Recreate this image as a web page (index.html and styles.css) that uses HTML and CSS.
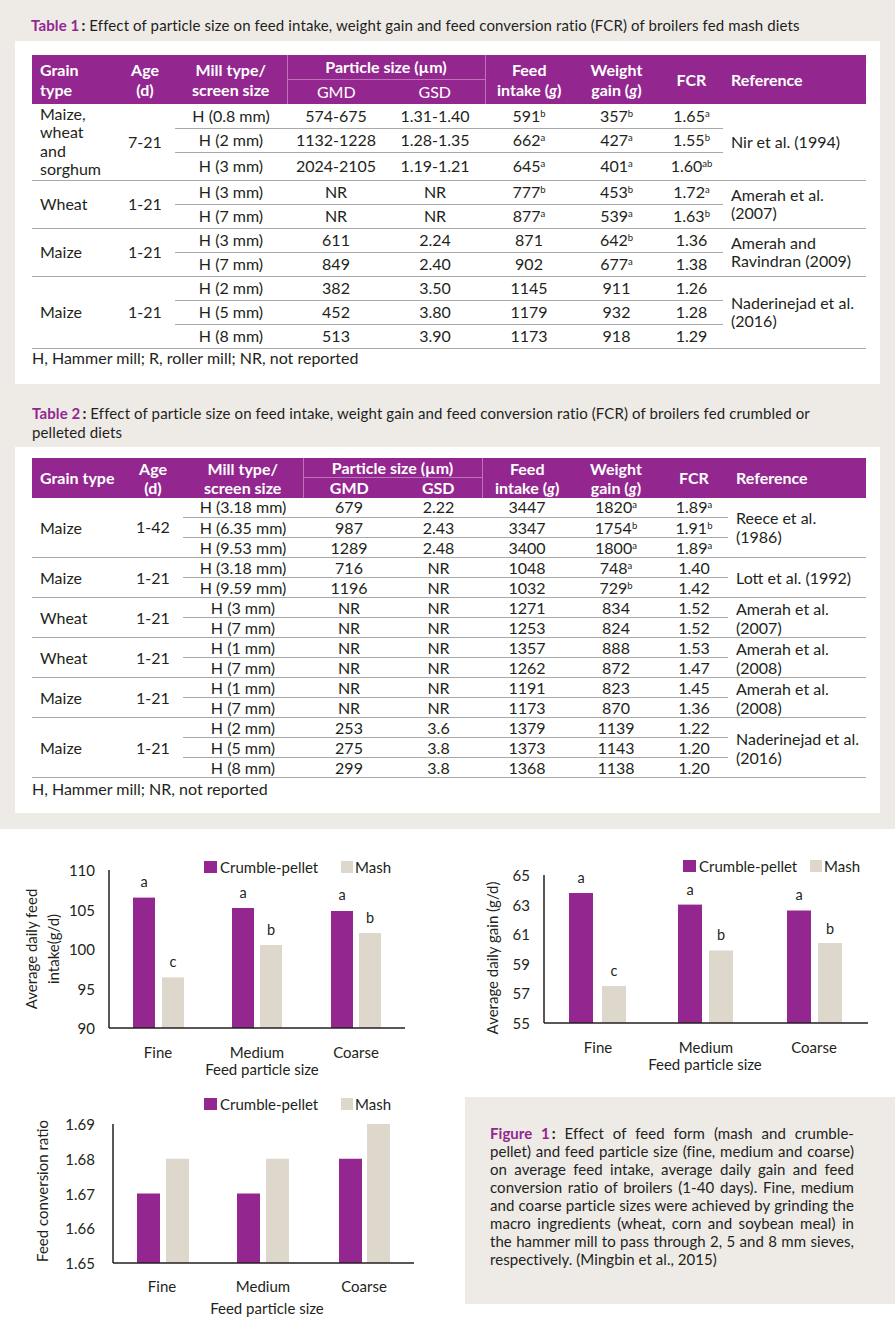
FILE: index.html
```html
<!DOCTYPE html>
<html lang="en">
<head>
<meta charset="utf-8">
<title>Particle size tables</title>
<link rel="stylesheet" href="styles.css">
</head>
<body>
<section class="top">
  <p class="caption c1"><b class="lab">Table 1</b><b class="colon">:</b> Effect of particle size on feed intake, weight gain and feed conversion ratio (FCR) of broilers fed mash diets</p>
  <div class="panel p1">
    <table class="t t1">
      <colgroup><col style="width:83px"><col style="width:60px"><col style="width:112px"><col style="width:98px"><col style="width:100px"><col style="width:88px"><col style="width:87px"><col style="width:63px"><col style="width:143px"></colgroup>
      <thead>
        <tr class="h1"><th rowspan="2" class="l">Grain<br>type</th><th rowspan="2">Age<br>(d)</th><th rowspan="2">Mill type/<br>screen size</th><th colspan="2" class="ps">Particle size (µm)</th><th rowspan="2" class="vr">Feed<br>intake (<i>g</i>)</th><th rowspan="2">Weight<br>gain (<i>g</i>)</th><th rowspan="2">FCR</th><th rowspan="2" class="l">Reference</th></tr>
        <tr class="h2"><th class="sub vl">GMD</th><th class="sub">GSD</th></tr>
      </thead>
      <tbody>
        <tr class="g"><td rowspan="3" class="l">Maize,<br>wheat<br>and<br>sorghum</td><td rowspan="3">7-21</td><td>H (0.8 mm)</td><td>574-675</td><td>1.31-1.40</td><td>591<sup>b</sup></td><td>357<sup>b</sup></td><td>1.65<sup>a</sup></td><td rowspan="3" class="l">Nir et al. (1994)</td></tr>
        <tr><td>H (2 mm)</td><td>1132-1228</td><td>1.28-1.35</td><td>662<sup>a</sup></td><td>427<sup>a</sup></td><td>1.55<sup>b</sup></td></tr>
        <tr class="tall"><td>H (3 mm)</td><td>2024-2105</td><td>1.19-1.21</td><td>645<sup>a</sup></td><td>401<sup>a</sup></td><td>1.60<sup>ab</sup></td></tr>
        <tr class="g"><td rowspan="2" class="l">Wheat</td><td rowspan="2">1-21</td><td>H (3 mm)</td><td>NR</td><td>NR</td><td>777<sup>b</sup></td><td>453<sup>b</sup></td><td>1.72<sup>a</sup></td><td rowspan="2" class="l">Amerah et al.<br>(2007)</td></tr>
        <tr><td>H (7 mm)</td><td>NR</td><td>NR</td><td>877<sup>a</sup></td><td>539<sup>a</sup></td><td>1.63<sup>b</sup></td></tr>
        <tr class="g"><td rowspan="2" class="l">Maize</td><td rowspan="2">1-21</td><td>H (3 mm)</td><td>611</td><td>2.24</td><td>871</td><td>642<sup>b</sup></td><td>1.36</td><td rowspan="2" class="l">Amerah and<br>Ravindran (2009)</td></tr>
        <tr><td>H (7 mm)</td><td>849</td><td>2.40</td><td>902</td><td>677<sup>a</sup></td><td>1.38</td></tr>
        <tr class="g"><td rowspan="3" class="l">Maize</td><td rowspan="3">1-21</td><td>H (2 mm)</td><td>382</td><td>3.50</td><td>1145</td><td>911</td><td>1.26</td><td rowspan="3" class="l">Naderinejad et al.<br>(2016)</td></tr>
        <tr><td>H (5 mm)</td><td>452</td><td>3.80</td><td>1179</td><td>932</td><td>1.28</td></tr>
        <tr class="last"><td>H (8 mm)</td><td>513</td><td>3.90</td><td>1173</td><td>918</td><td>1.29</td></tr>
      </tbody>
    </table>
    <p class="foot">H, Hammer mill; R, roller mill; NR, not reported</p>
  </div>

  <p class="caption c2"><span class="ln"><b class="lab">Table 2</b><b class="colon">:</b> Effect of particle size on feed intake, weight gain and feed conversion ratio (FCR) of broilers fed crumbled or</span><span class="ln">pelleted diets</span></p>
  <div class="panel p2">
    <table class="t t2">
      <colgroup><col style="width:91px"><col style="width:60px"><col style="width:120px"><col style="width:92px"><col style="width:87px"><col style="width:90px"><col style="width:88px"><col style="width:68px"><col style="width:138px"></colgroup>
      <thead>
        <tr class="h1"><th rowspan="2" class="l">Grain type</th><th rowspan="2">Age<br>(d)</th><th rowspan="2">Mill type/<br>screen size</th><th colspan="2" class="ps">Particle size (µm)</th><th rowspan="2" class="vr">Feed<br>intake (<i>g</i>)</th><th rowspan="2">Weight<br>gain (<i>g</i>)</th><th rowspan="2">FCR</th><th rowspan="2" class="l">Reference</th></tr>
        <tr class="h2"><th class="vl">GMD</th><th>GSD</th></tr>
      </thead>
      <tbody>
        <tr class="g"><td rowspan="3" class="l">Maize</td><td rowspan="3">1-42</td><td>H (3.18 mm)</td><td>679</td><td>2.22</td><td>3447</td><td>1820<sup>a</sup></td><td>1.89<sup>a</sup></td><td rowspan="3" class="l">Reece et al.<br>(1986)</td></tr>
        <tr><td>H (6.35 mm)</td><td>987</td><td>2.43</td><td>3347</td><td>1754<sup>b</sup></td><td>1.91<sup>b</sup></td></tr>
        <tr><td>H (9.53 mm)</td><td>1289</td><td>2.48</td><td>3400</td><td>1800<sup>a</sup></td><td>1.89<sup>a</sup></td></tr>
        <tr class="g"><td rowspan="2" class="l">Maize</td><td rowspan="2">1-21</td><td>H (3.18 mm)</td><td>716</td><td>NR</td><td>1048</td><td>748<sup>a</sup></td><td>1.40</td><td rowspan="2" class="l">Lott et al. (1992)</td></tr>
        <tr><td>H (9.59 mm)</td><td>1196</td><td>NR</td><td>1032</td><td>729<sup>b</sup></td><td>1.42</td></tr>
        <tr class="g"><td rowspan="2" class="l">Wheat</td><td rowspan="2">1-21</td><td>H (3 mm)</td><td>NR</td><td>NR</td><td>1271</td><td>834</td><td>1.52</td><td rowspan="2" class="l">Amerah et al.<br>(2007)</td></tr>
        <tr><td>H (7 mm)</td><td>NR</td><td>NR</td><td>1253</td><td>824</td><td>1.52</td></tr>
        <tr class="g"><td rowspan="2" class="l">Wheat</td><td rowspan="2">1-21</td><td>H (1 mm)</td><td>NR</td><td>NR</td><td>1357</td><td>888</td><td>1.53</td><td rowspan="2" class="l">Amerah et al.<br>(2008)</td></tr>
        <tr><td>H (7 mm)</td><td>NR</td><td>NR</td><td>1262</td><td>872</td><td>1.47</td></tr>
        <tr class="g"><td rowspan="2" class="l">Maize</td><td rowspan="2">1-21</td><td>H (1 mm)</td><td>NR</td><td>NR</td><td>1191</td><td>823</td><td>1.45</td><td rowspan="2" class="l">Amerah et al.<br>(2008)</td></tr>
        <tr><td>H (7 mm)</td><td>NR</td><td>NR</td><td>1173</td><td>870</td><td>1.36</td></tr>
        <tr class="g"><td rowspan="3" class="l">Maize</td><td rowspan="3">1-21</td><td>H (2 mm)</td><td>253</td><td>3.6</td><td>1379</td><td>1139</td><td>1.22</td><td rowspan="3" class="l">Naderinejad et al.<br>(2016)</td></tr>
        <tr><td>H (5 mm)</td><td>275</td><td>3.8</td><td>1373</td><td>1143</td><td>1.20</td></tr>
        <tr class="last"><td>H (8 mm)</td><td>299</td><td>3.8</td><td>1368</td><td>1138</td><td>1.20</td></tr>
      </tbody>
    </table>
    <p class="foot">H, Hammer mill; NR, not reported</p>
  </div>
</section>

<section class="figs">
  <div class="chart">
    <svg width="450" height="252" viewBox="0 0 450 252">
      <g transform="translate(0,2)">
        <rect class="cp" x="204" y="30" width="13" height="12"/><text class="lg" x="220" y="36">Crumble-pellet</text>
        <rect class="ms" x="341" y="30" width="12" height="12"/><text class="lg" x="355" y="36">Mash</text>
        <text class="tk" x="95" y="39">110</text><text class="tk" x="95" y="78.5">105</text><text class="tk" x="95" y="118">100</text><text class="tk" x="95" y="157.5">95</text><text class="tk" x="95" y="197">90</text>
        <rect class="cp" x="133" y="66.6" width="22" height="130.4"/><rect class="ms" x="162" y="146.4" width="22" height="50.6"/>
        <rect class="cp" x="232" y="77" width="22" height="120"/><rect class="ms" x="260" y="114" width="22" height="83"/>
        <rect class="cp" x="331" y="80" width="22" height="117"/><rect class="ms" x="359" y="102" width="22" height="95"/>
        <line class="ax" x1="109" y1="39" x2="109" y2="197"/><line class="ax" x1="109" y1="197" x2="405" y2="197"/>
        <text class="lt" x="144" y="50">a</text><text class="lt" x="173" y="130">c</text><text class="lt" x="243" y="61">a</text><text class="lt" x="271" y="98">b</text><text class="lt" x="342" y="63">a</text><text class="lt" x="370" y="86">b</text>
        <text class="ct" x="158" y="221">Fine</text><text class="ct" x="257" y="221">Medium</text><text class="ct" x="356" y="221">Coarse</text>
        <text class="ct" x="262" y="238">Feed particle size</text>
        <text class="yl" transform="translate(31,118) rotate(-90)">Average daily feed</text>
        <text class="yl" transform="translate(53,118) rotate(-90)">intake(g/d)</text>
      </g>
    </svg>
  </div>
  <div class="chart">
    <svg width="445" height="252" viewBox="0 0 445 252">
      <g transform="translate(0,2)">
        <rect class="cp" x="233" y="29" width="13" height="12"/><text class="lg" x="249" y="35">Crumble-pellet</text>
        <rect class="ms" x="360" y="29" width="12" height="12"/><text class="lg" x="374" y="35">Mash</text>
        <text class="tk" x="80" y="44">65</text><text class="tk" x="80" y="73.6">63</text><text class="tk" x="80" y="103.2">61</text><text class="tk" x="80" y="132.8">59</text><text class="tk" x="80" y="162.4">57</text><text class="tk" x="80" y="192">55</text>
        <rect class="cp" x="119" y="62" width="24" height="130"/><rect class="ms" x="152" y="155" width="24" height="37"/>
        <rect class="cp" x="228" y="73.6" width="24" height="118.4"/><rect class="ms" x="259" y="119.5" width="24" height="72.5"/>
        <rect class="cp" x="337" y="79.5" width="24" height="112.5"/><rect class="ms" x="368" y="112" width="24" height="80"/>
        <line class="ax" x1="94" y1="44" x2="94" y2="192"/><line class="ax" x1="94" y1="192" x2="418" y2="192"/>
        <text class="lt" x="131" y="46">a</text><text class="lt" x="164" y="139">c</text><text class="lt" x="240" y="58">a</text><text class="lt" x="271" y="103">b</text><text class="lt" x="349" y="63">a</text><text class="lt" x="380" y="97">b</text>
        <text class="ct" x="148" y="216">Fine</text><text class="ct" x="256" y="216">Medium</text><text class="ct" x="364" y="216">Coarse</text>
        <text class="ct" x="255" y="233">Feed particle size</text>
        <text class="yl" transform="translate(42,127) rotate(-90)">Average daily gain (g/d)</text>
      </g>
    </svg>
  </div>
  <div class="chart">
    <svg width="450" height="244" viewBox="0 0 450 244">
      <rect class="cp" x="204" y="17" width="13" height="12"/><text class="lg" x="220" y="23">Crumble-pellet</text>
      <rect class="ms" x="341" y="17" width="12" height="12"/><text class="lg" x="355" y="23">Mash</text>
      <text class="tk" x="95" y="43">1.69</text><text class="tk" x="95" y="77.75">1.68</text><text class="tk" x="95" y="112.5">1.67</text><text class="tk" x="95" y="147.25">1.66</text><text class="tk" x="95" y="182">1.65</text>
      <rect class="cp" x="137" y="112.5" width="23" height="69.5"/><rect class="ms" x="166" y="77.75" width="23" height="104.25"/>
      <rect class="cp" x="237" y="112.5" width="23" height="69.5"/><rect class="ms" x="266" y="77.75" width="23" height="104.25"/>
      <rect class="cp" x="339" y="77.75" width="23" height="104.25"/><rect class="ms" x="367" y="43" width="23" height="139"/>
      <line class="ax" x1="113" y1="43" x2="113" y2="182"/><line class="ax" x1="113" y1="182" x2="414" y2="182"/>
      <text class="ct" x="162" y="205">Fine</text><text class="ct" x="263" y="205">Medium</text><text class="ct" x="364" y="205">Coarse</text>
      <text class="ct" x="267" y="227">Feed particle size</text>
      <text class="yl" transform="translate(42,110) rotate(-90)">Feed conversion ratio</text>
    </svg>
  </div>
  <div class="capcell">
    <p class="figcap">
      <span class="ln j"><b class="lab">Figure 1</b><b class="colon">:</b> Effect of feed form (mash and crumble-</span>
      <span class="ln j">pellet) and feed particle size (fine, medium and coarse)</span>
      <span class="ln j">on average feed intake, average daily gain and feed</span>
      <span class="ln j">conversion ratio of broilers (1-40 days). Fine, medium</span>
      <span class="ln j">and coarse particle sizes were achieved by grinding the</span>
      <span class="ln j">macro ingredients (wheat, corn and soybean meal) in</span>
      <span class="ln j">the hammer mill to pass through 2, 5 and 8 mm sieves,</span>
      <span class="ln">respectively. (Mingbin et al., 2015)</span>
    </p>
  </div>
</section>
</body>
</html>
```

FILE: styles.css
```css
* { box-sizing: border-box; }
body {
  margin: 0;
  width: 895px;
  font-family: Lato, "Noto Sans", sans-serif;
  color: #231f20;
  background: #ffffff;
}
.top {
  background: #eeebe7;
  padding: 16px 0 16px;
}
.caption {
  margin: 0;
  font-size: 15px;
  letter-spacing: 0.12px;
  line-height: 18px;
}
.c1 { margin: 0 0 7px 31px; }
.c2 { margin: 20px 0 5px 32px; line-height: 19px; }
.ln { display: block; white-space: nowrap; }
.lab { color: #93278f; }
.colon { margin-left: 2px; }
.panel {
  background: #ffffff;
  margin: 0 15px;
}
.p1 { padding: 14px 14px 17px 17px; }
.p2 { padding: 11px 14px 15px 17px; }
.t {
  border-collapse: collapse;
  table-layout: fixed;
  width: 834px;
  font-size: 16px;
}
.t th {
  background: #93278f;
  color: #ffffff;
  font-weight: 700;
  font-size: 16px;
  text-align: center;
  padding: 0 4px;
  vertical-align: middle;
}
.t th.l { text-align: left; padding-left: 8px; }
.t th i { font-style: italic; }
.t1 th { line-height: 20px; }
.t1 .h1 { height: 24px; }
.t1 .h2 { height: 25px; }
.t2 th { line-height: 19px; }
.t2 .h1, .t2 .h2 { height: 20px; }
.t th.ps { border-left: 1px solid #b874b3; border-right: 1px solid #b874b3; border-bottom: 1px solid #b874b3; }
.t th.vl { border-left: 1px solid #b874b3; }
.t th.vr { border-left: 1px solid #b874b3; }
.t th.sub { font-weight: 400; }
.t td {
  text-align: center;
  padding: 0 4px;
  vertical-align: middle;
  border-top: 1.5px solid #a9a9a9;
  white-space: nowrap;
}
.t td.l { text-align: left; padding-left: 8px; }
.t td[rowspan] { border-top: none; }
.t tr.g td { border-top: 1.5px solid #a9a9a9; }
.t tbody tr:first-child td { border-top: none; }
.t tr.last td { border-bottom: 1.5px solid #a9a9a9; }
.t tbody td[rowspan] { border-bottom: 1.5px solid #a9a9a9; }
.t1 td { height: 24px; line-height: 18.5px; }
.t1 tr.tall td { height: 28px; }
.t2 td { height: 20px; line-height: 18px; }
.t2 td.l { line-height: 19px; }
sup {
  font-size: 9.5px;
  line-height: 0;
  vertical-align: 5px;
}
.foot {
  margin: 0;
  font-size: 16px;
  line-height: 18px;
}
.p2 .foot { margin-top: 2px; }

.figs {
  display: grid;
  grid-template-columns: 450px 445px;
  grid-template-rows: 252px 244px;
}
.chart svg { display: block; }
.cp { fill: #93278f; }
.ms { fill: #ded7cc; }
.ax { stroke: #231f20; stroke-width: 1.5; }
.chart text {
  font-family: Lato, "Noto Sans", sans-serif;
  fill: #231f20;
  dominant-baseline: central;
}
.tk { font-size: 15px; text-anchor: end; }
.lg { font-size: 15px; }
.lt { font-size: 14.5px; text-anchor: middle; fill: #3c3c3c; }
.ct { font-size: 15px; text-anchor: middle; }
.yl { font-size: 15px; text-anchor: middle; }
.capcell { padding: 16px 0 0 15px; }
.figcap {
  margin: 0;
  height: 207px;
  background: #eeebe7;
  padding: 27px 41px 0 25px;
  font-size: 15px;
  letter-spacing: 0.05px;
  line-height: 18px;
}
.figcap .j {
  text-align: justify;
  text-align-last: justify;
}
```
